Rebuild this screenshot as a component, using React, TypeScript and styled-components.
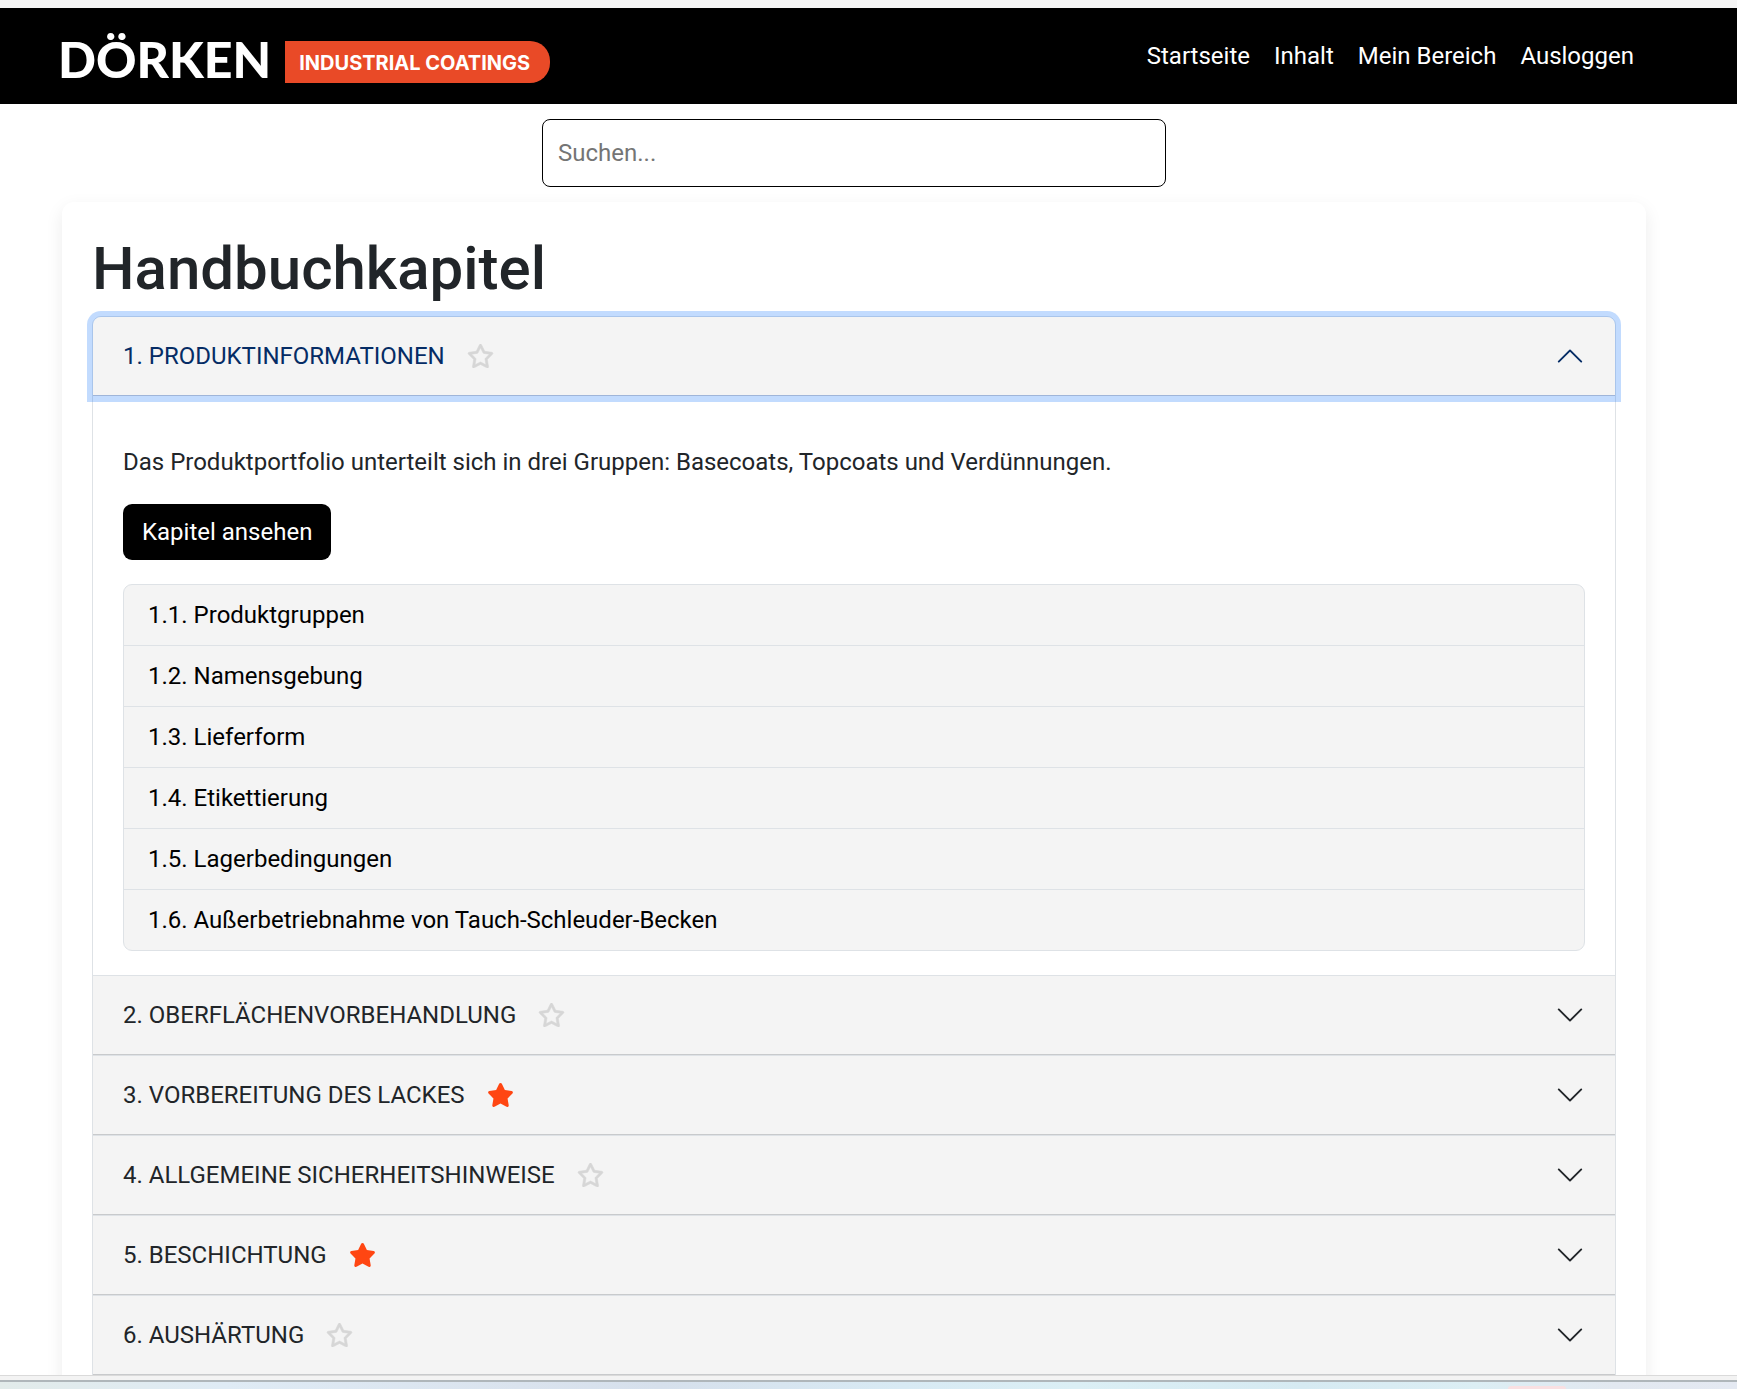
import React, { useState } from "react";
import styled, { createGlobalStyle, css } from "styled-components";
import { FaRegStar, FaStar } from "react-icons/fa6";

const GlobalStyle = createGlobalStyle`
  *, *::before, *::after { box-sizing: border-box; }
  body {
    margin: 0;
    background: #fff;
    color: #212529;
    font-family: Roboto, "Liberation Sans", sans-serif;
    font-size: 24px;
    line-height: 36px;
  }
  button, input { font: inherit; color: inherit; }
`;

const Window = styled.div`
  display: flex;
  flex-direction: column;
  height: 100vh;
  overflow: hidden;
`;

const TopEdge = styled.div`
  flex: none;
  height: 8px;
  background: #f6f6f6;
`;

const Page = styled.div`
  flex: 1;
  min-height: 0;
  overflow: hidden;
`;

const WindowFrame = styled.div`
  flex: none;
  height: 7px;
  background: #f3f3f3;
  border-top: 1px solid #dadada;
  border-bottom: 2px solid #afb6ba;
`;

const Desktop = styled.div`
  flex: none;
  display: flex;
  align-items: flex-end;
  justify-content: flex-end;
  height: 7px;
  padding-right: 171px;
  background: linear-gradient(90deg, #e2ebea 0%, #dfebf5 13%, #dae3ee 30%, #d6e0ec 38%, #d8eaf4 52%, #dbeff5 62%, #d6eaf2 75%, #dceef4 85%, #e2e8f0 93%, #e4e9f2 100%);
`;

const DesktopTab = styled.div`
  width: 58px;
  height: 3px;
  border-radius: 3px 3px 0 0;
  background: #f9e0e2;
`;

const Header = styled.header`
  display: flex;
  align-items: flex-start;
  justify-content: space-between;
  padding: 27px 91px 21px 58px;
  background: #000;
  color: #fff;
`;

const Brand = styled.a`
  display: flex;
  align-items: flex-end;
  gap: 14px;
  color: #fff;
  text-decoration: none;
`;

const BrandName = styled.span`
  font-family: Lato, sans-serif;
  font-size: 50px;
  font-weight: 900;
  line-height: 48px;
`;

const BrandBadge = styled.span`
  padding: 2px 20px 0 14px;
  border-radius: 0 20px 20px 0;
  background: #e94a27;
  font-family: Inter, sans-serif;
  font-size: 20px;
  font-weight: 700;
  line-height: 40px;
`;

const Nav = styled.nav`
  display: flex;
  padding-right: 12px;
  gap: 24px;
`;

const NavLink = styled.a`
  color: #fff;
  line-height: 42px;
  text-decoration: none;
`;

const Main = styled.main`
  display: flex;
  flex-direction: column;
  gap: 15px;
  padding: 15px 91px 30px 62px;
`;

const Search = styled.input`
  align-self: center;
  width: 100%;
  max-width: 624px;
  height: 68px;
  padding: 0 15px;
  border: 1px solid #000;
  border-radius: 8px;
  background: #fff;
  &::placeholder { color: #757575; opacity: 1; }
`;

const Card = styled.section`
  padding: 30px;
  border-radius: 12px;
  background: #fff;
  box-shadow: 0 6px 18px rgba(0, 0, 0, 0.08);
`;

const Title = styled.h1`
  margin: 0 0 10px;
  font-size: 60px;
  font-weight: 500;
  line-height: 74px;
`;

const Accordion = styled.div`
  border: 1px solid #dee2e6;
  border-radius: 9px 9px 0 0;
`;

const Item = styled.div`
  & + & { border-top: 1px solid #dee2e6; }
  &:first-child > :first-child {
    border-top-left-radius: 8px;
    border-top-right-radius: 8px;
  }
`;

const ItemHeader = styled.div<{ $focused: boolean }>`
  display: flex;
  align-items: center;
  padding: 21px 30px 22px;
  background: #f4f4f4;
  color: #212529;
  box-shadow: inset 0 -1px 0 #c8cacc;
  ${(p) =>
    p.$focused &&
    css`
      color: #052c65;
      box-shadow: 0 0 0 6px rgba(13, 110, 253, 0.25), inset 0 -1px 0 #9fb5d9;
    `}
`;

const PlainButton = styled.button`
  display: flex;
  align-items: center;
  padding: 0;
  border: 0;
  background: none;
  cursor: pointer;
  outline: none;
`;

const StarButton = styled(PlainButton)<{ $marked: boolean }>`
  margin-left: 22px;
  color: ${(p) => (p.$marked ? "#ff4612" : "#d6d6d6")};
  svg {
    width: 27px;
    height: 24px;
    stroke-width: ${(p) => (p.$marked ? 0 : 12)};
  }
`;

const ChevronButton = styled(PlainButton)<{ $open: boolean }>`
  flex: 1;
  justify-content: flex-end;
  svg {
    width: 30px;
    height: 30px;
    transform: ${(p) => (p.$open ? "rotate(180deg)" : "none")};
  }
`;

const ItemBody = styled.div`
  display: flex;
  flex-direction: column;
  align-items: flex-start;
  gap: 24px;
  padding: 48px 30px 24px;
`;

const Lead = styled.p`
  margin: 0;
`;

const ChapterLink = styled.a`
  padding: 10px 19px;
  border-radius: 9px;
  background: #000;
  color: #fff;
  text-decoration: none;
`;

const SectionList = styled.ul`
  align-self: stretch;
  margin: 0;
  padding: 0;
  list-style: none;
  border: 1px solid #dee2e6;
  border-radius: 9px;
  background: #f4f4f4;
`;

const SectionItem = styled.li`
  & + & { border-top: 1px solid #dee2e6; }
`;

const SectionLink = styled.a`
  display: block;
  padding: 12px 24px;
  color: #000;
  text-decoration: none;
`;

type Chapter = { title: string; marked: boolean; lead?: string; sections?: string[] };

const chapters: Chapter[] = [
  {
    title: "1. PRODUKTINFORMATIONEN",
    marked: false,
    lead: "Das Produktportfolio unterteilt sich in drei Gruppen: Basecoats, Topcoats und Verdünnungen.",
    sections: [
      "1.1. Produktgruppen",
      "1.2. Namensgebung",
      "1.3. Lieferform",
      "1.4. Etikettierung",
      "1.5. Lagerbedingungen",
      "1.6. Außerbetriebnahme von Tauch-Schleuder-Becken",
    ],
  },
  { title: "2. OBERFLÄCHENVORBEHANDLUNG", marked: false },
  { title: "3. VORBEREITUNG DES LACKES", marked: true },
  { title: "4. ALLGEMEINE SICHERHEITSHINWEISE", marked: false },
  { title: "5. BESCHICHTUNG", marked: true },
  { title: "6. AUSHÄRTUNG", marked: false },
];

const navItems = ["Startseite", "Inhalt", "Mein Bereich", "Ausloggen"];

function Chevron() {
  return (
    <svg viewBox="0 0 16 16" fill="currentColor" aria-hidden="true">
      <path
        fillRule="evenodd"
        d="M1.646 4.646a.5.5 0 0 1 .708 0L8 10.293l5.646-5.647a.5.5 0 0 1 .708.708l-6 6a.5.5 0 0 1-.708 0l-6-6a.5.5 0 0 1 0-.708z"
      />
    </svg>
  );
}

export default function App() {
  const [open, setOpen] = useState(0);
  const [marks, setMarks] = useState(chapters.map((c) => c.marked));

  const toggle = (i: number) => setOpen(open === i ? -1 : i);
  const toggleMark = (i: number) => setMarks(marks.map((m, k) => (k === i ? !m : m)));

  return (
    <Window>
      <GlobalStyle />
      <TopEdge />
      <Page>
        <Header>
          <Brand href="#">
            <BrandName>DÖRKEN</BrandName>
            <BrandBadge>INDUSTRIAL COATINGS</BrandBadge>
          </Brand>
          <Nav>
            {navItems.map((label) => (
              <NavLink key={label} href="#">{label}</NavLink>
            ))}
          </Nav>
        </Header>
        <Main>
          <Search type="search" placeholder="Suchen..." aria-label="Suchen" />
          <Card>
            <Title>Handbuchkapitel</Title>
            <Accordion>
              {chapters.map((chapter, i) => (
                <Item key={chapter.title}>
                  <ItemHeader $focused={open === i}>
                    <PlainButton type="button" aria-expanded={open === i} onClick={() => toggle(i)}>
                      {chapter.title}
                    </PlainButton>
                    <StarButton
                      type="button"
                      $marked={marks[i]}
                      aria-pressed={marks[i]}
                      aria-label="Favorit"
                      onClick={() => toggleMark(i)}
                    >
                      {marks[i] ? <FaStar /> : <FaRegStar />}
                    </StarButton>
                    <ChevronButton
                      type="button"
                      $open={open === i}
                      aria-label="Kapitel umschalten"
                      onClick={() => toggle(i)}
                    >
                      <Chevron />
                    </ChevronButton>
                  </ItemHeader>
                  {open === i && chapter.sections && (
                    <ItemBody>
                      <Lead>{chapter.lead}</Lead>
                      <ChapterLink href="#">Kapitel ansehen</ChapterLink>
                      <SectionList>
                        {chapter.sections.map((section) => (
                          <SectionItem key={section}>
                            <SectionLink href="#">{section}</SectionLink>
                          </SectionItem>
                        ))}
                      </SectionList>
                    </ItemBody>
                  )}
                </Item>
              ))}
            </Accordion>
          </Card>
        </Main>
      </Page>
      <WindowFrame />
      <Desktop>
        <DesktopTab />
      </Desktop>
    </Window>
  );
}
